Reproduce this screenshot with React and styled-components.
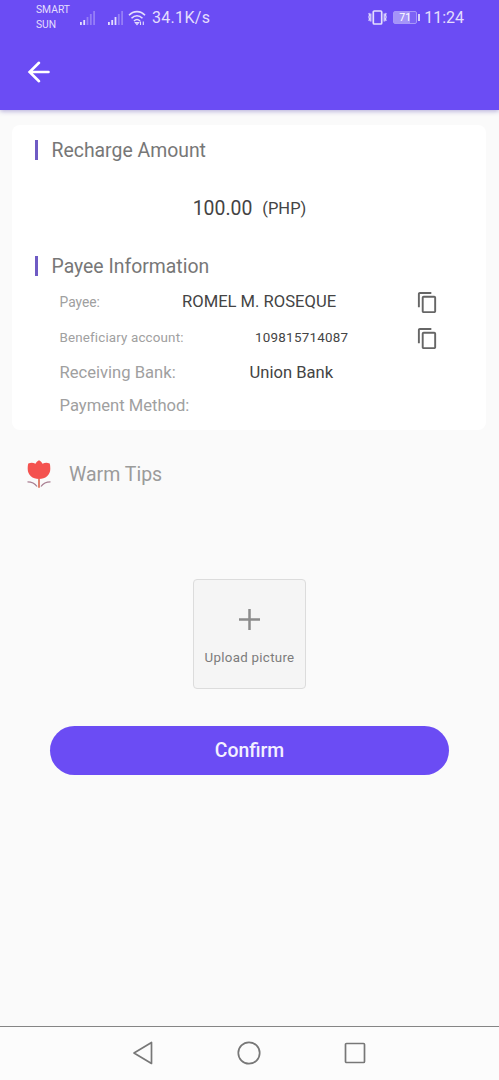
import React from 'react'
import styled, { createGlobalStyle } from 'styled-components'
import { MdContentCopy } from 'react-icons/md'

const GlobalStyle = createGlobalStyle`
* {
  box-sizing: border-box;
}

body {
  margin: 0;
  background: #fafafa;
  font-family: Roboto, sans-serif;
}
`

const Screen = styled.div`
display: flex;
flex-flow: column;
height: 1080px;
overflow: hidden;
background: #fafafa;
`

const Header = styled.header`
height: 110px;
flex: none;
background: #6b4cf4;
box-shadow: 0 1px 5px rgba(60, 40, 160, 0.4);
color: #e4defd;
`

const StatusBar = styled.div`
display: flex;
align-items: center;
height: 35px;
padding: 0 36px;

svg {
  flex: none;
}
`

const Carriers = styled.div`
width: 44px;
font-size: 10.3px;
line-height: 14.5px;
`

const Signal = styled.svg`
margin-right: ${props => props.gap}px;
`

const Speed = styled.span`
margin-left: 6px;
font-size: 16px;
letter-spacing: 0.3px;
`

const StatusRight = styled.div`
display: flex;
align-items: center;
margin-left: auto;
`

const Battery = styled.div`
display: flex;
align-items: center;
margin: 0 4px 0 6px;

span {
  width: 24px;
  height: 13px;
  border: 1px solid #a797f8;
  border-radius: 2px;
  background: linear-gradient(90deg, #a594f8 71%, #7c62f5 71%);
  color: #fff;
  font-size: 10.5px;
  line-height: 11px;
  text-align: center;
}

&:after {
  content: '';
  width: 2px;
  height: 7px;
  margin-left: 1px;
  background: #d8d0fc;
}
`

const Clock = styled.span`
margin-right: -1px;
font-size: 16px;
`

const BackButton = styled.button`
display: block;
margin: 25px 0 0 27px;
padding: 0;
border: 0;
background: none;

svg {
  display: block;
}
`

const Card = styled.section`
display: flex;
flex-flow: column;
flex: none;
width: 474px;
height: 305px;
margin: 15px 0 0 12px;
padding-top: 14px;
border-radius: 8px;
background: #fff;
`

const SectionTitle = styled.h2`
display: flex;
align-items: center;
height: 22px;
margin: 0 0 0 22.5px;
color: #777;
font-size: 19.4px;
font-weight: 400;

&:before {
  content: '';
  width: 3px;
  height: 20px;
  margin-right: 14px;
  background: #6f5bc4;
}
`

const Amount = styled.div`
display: flex;
align-items: center;
justify-content: center;
gap: 10px;
height: 94px;
padding-left: 1px;
color: #444;
font-size: 19.4px;

small {
  font-size: 16.5px;
}
`

const Row = styled.div`
display: flex;
align-items: center;
height: ${props => props.height}px;
padding: 0 47px 0 47.5px;
`

const Label = styled.span`
width: ${props => props.width}px;
color: #a0a0a0;
font-size: ${props => props.size}px;
letter-spacing: ${props => props.spacing || 0}px;
white-space: nowrap;
`

const Value = styled.span`
color: #444;
font-size: ${props => props.size}px;
letter-spacing: ${props => props.spacing || 0}px;
white-space: nowrap;
`

const CopyIcon = styled(MdContentCopy)`
margin: 1px 0 0 auto;
color: #666;
font-size: 23px;
`

const Tips = styled.div`
display: flex;
align-items: center;
flex: none;
height: 32px;
margin: 28px 0 0 26px;
gap: 17px;
color: #9b9b9b;
font-size: 19.5px;
`

const Upload = styled.button`
display: flex;
flex-flow: column;
align-items: center;
flex: none;
width: 113px;
height: 110px;
margin: 89px auto 0;
padding: 29px 0 0;
border: 1px solid #dcdcdc;
border-radius: 4px;
background: #f5f5f5;
color: #7c7c7c;
font-family: inherit;
font-size: 13.3px;
letter-spacing: 0.3px;
white-space: nowrap;

svg {
  flex: none;
  margin-bottom: 20px;
}
`

const Confirm = styled.button`
flex: none;
height: 49.5px;
margin: 36.5px 50px 0;
padding: 0;
border: 0;
border-radius: 25px;
background: #6b4cf4;
color: #f3f0ff;
font-family: inherit;
font-size: 19.4px;
font-weight: 500;
`

const NavBar = styled.nav`
display: flex;
align-items: center;
justify-content: space-between;
flex: none;
height: 54px;
margin-top: auto;
padding: 0 133px 2px 132px;
border-top: 1px solid #858585;
background: #fcfcfc;
`

const Bars = ({ gap, active }) => (
  <Signal gap={gap} width="16" height="16" viewBox="0 0 16 16" fill="#e4defd">
    {[3, 5, 8, 11, 14].map((h, i) => (
      <rect key={h} x={i * 3.3} y={15 - h} width="1.8" height={h} opacity={i < active ? 1 : 0.35} />
    ))}
  </Signal>
)

const Wifi = () => (
  <svg width="18" height="16" viewBox="0 0 18 16" fill="none" stroke="#e4defd" strokeWidth="1.6">
    <path d="M1 5.2C5.5.4 12.5.4 17 5.2M3.5 8.2C6.8 5 11.2 5 14.5 8.2M6 11c1.8-1.8 4.2-1.8 6 0" />
    <path d="M7.3 12.5h3.4L9 14.7zM12.5 11.5v3.5M15.3 11.5v3.5" strokeWidth="1.1" />
  </svg>
)

const Vibrate = () => (
  <svg width="19" height="15" viewBox="0 0 19 15" fill="none" stroke="#e4defd">
    <rect x="5.3" y="1" width="8.4" height="13" rx="1" strokeWidth="1.7" />
    <path d="M2.8 3.5v8M16.2 3.5v8M.9 3l.6 2-.6 2 .6 2-.6 2M18.1 3l-.6 2 .6 2-.6 2 .6 2" strokeWidth="1.2" />
  </svg>
)

const Tulip = () => (
  <svg width="26" height="30" viewBox="0 0 26 30">
    <path d="M13 1.2c1.7 1 2.8 2 3.5 3.500C19 3.700 21 3.500 23.700 4.500 24.200 6 24.300 8 24.300 10 24.300 16 19.500 20 13 20S1.700 16 1.700 10C1.700 8 1.800 6 2.300 4.500 5 3.500 7 3.700 9.500 4.700 10.200 3.200 11.300 2.200 13 1.200z" fill="#f4524f" />
    <path d="M13 20v8.800" stroke="#dc6d55" strokeWidth="1.7" />
    <path d="M1.500 22.800c4 0 7.500 1.700 9.500 4.700M24.500 22.800c-4 0-7.500 1.700-9.500 4.700" fill="none" stroke="#a97f92" strokeWidth="1.3" />
  </svg>
)

const App = () => (
  <Screen>
    <GlobalStyle />

    <Header>
      <StatusBar>
        <Carriers>
          <div>SMART</div>
          <div>SUN</div>
        </Carriers>
        <Bars gap={12} active={2} />
        <Bars gap={4} active={3} />
        <Wifi />
        <Speed>34.1K/s</Speed>
        <StatusRight>
          <Vibrate />
          <Battery><span>71</span></Battery>
          <Clock>11:24</Clock>
        </StatusRight>
      </StatusBar>
      <BackButton aria-label="Back">
        <svg width="24" height="24" viewBox="0 0 24 24" fill="none" stroke="#fff" strokeWidth="2.6" strokeLinecap="round">
          <path d="M21.5 12H3M12 2.8L2.6 12l9.4 9.2" />
        </svg>
      </BackButton>
    </Header>

    <Card>
      <SectionTitle>Recharge Amount</SectionTitle>
      <Amount>
        <span>100.00</span>
        <small>(PHP)</small>
      </Amount>
      <SectionTitle>Payee Information</SectionTitle>
      <Row height={49}>
        <Label width={122.5} size={13.8}>Payee:</Label>
        <Value size={16.6}>ROMEL M. ROSEQUE</Value>
        <CopyIcon />
      </Row>
      <Row height={23}>
        <Label width={195.5} size={13.4} spacing={0.15}>Beneficiary account:</Label>
        <Value size={13.4} spacing={0.25}>109815714087</Value>
        <CopyIcon />
      </Row>
      <Row height={46}>
        <Label width={190} size={16.6}>Receiving Bank:</Label>
        <Value size={16.6}>Union Bank</Value>
      </Row>
      <Row height={21}>
        <Label width={190} size={16.6}>Payment Method:</Label>
      </Row>
    </Card>

    <Tips>
      <Tulip />
      <span>Warm Tips</span>
    </Tips>

    <Upload>
      <svg width="21" height="21" viewBox="0 0 21 21" stroke="#8c8c8c" strokeWidth="2.5">
        <path d="M10.5 0v21M0 10.5h21" />
      </svg>
      Upload picture
    </Upload>

    <Confirm>Confirm</Confirm>

    <NavBar>
      <svg width="22" height="24" viewBox="0 0 22 24" fill="none" stroke="#777" strokeWidth="1.7" strokeLinejoin="round">
        <path d="M19.5 1.5v21L2 12z" />
      </svg>
      <svg width="24" height="24" viewBox="0 0 24 24" fill="none" stroke="#777" strokeWidth="1.7">
        <circle cx="12" cy="12" r="10.7" />
      </svg>
      <svg width="22" height="22" viewBox="0 0 22 22" fill="none" stroke="#777" strokeWidth="1.7">
        <rect x="1.5" y="1.5" width="19" height="19" rx="1" />
      </svg>
    </NavBar>
  </Screen>
)

export default App
